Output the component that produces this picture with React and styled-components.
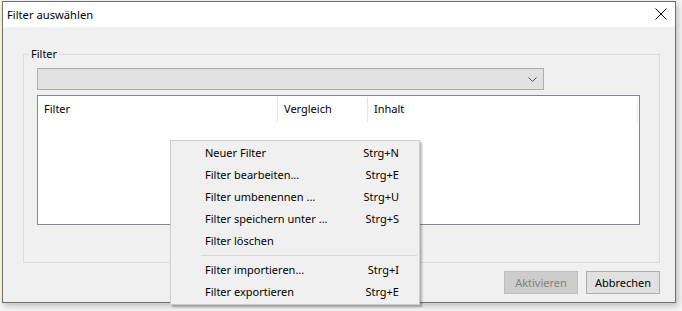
import React from "react";
import styled, { createGlobalStyle } from "styled-components";

const Global = createGlobalStyle`
  html, body { margin: 0; padding: 0; background: #f4f4f4; }
  body { font-family: "Noto Sans", "Open Sans", sans-serif; font-size: 11px; color: #000; }
  * { box-sizing: border-box; }
`;

const Desktop = styled.div`
  position: relative;
  width: 682px;
  height: 311px;
  overflow: hidden;
  display: flex;
  align-items: flex-start;
  background: #f4f4f4;
`;

const BackStrip = styled.div`
  width: 2px;
  height: 302px;
  background: #fbf6dc;
  flex: none;
`;

const Dialog = styled.div`
  width: 674px;
  height: 302px;
  margin-top: 1px;
  border: 1px solid #707070;
  background: #f0f0f0;
  box-shadow: 2px 3px 6px rgba(0, 0, 0, 0.22);
  display: flex;
  flex-direction: column;
  flex: none;
`;

const TitleBar = styled.div`
  height: 25px;
  flex: none;
  background: #fff;
  display: flex;
  align-items: center;
  justify-content: space-between;
  padding: 0 8px 1px 4px;
`;

const Title = styled.span`
  font-size: 11.2px;
`;

const Body = styled.div`
  flex: 1;
  display: flex;
  flex-direction: column;
  padding: 27px 15px 0 20px;
`;

const Group = styled.div`
  position: relative;
  height: 209px;
  border: 1px solid #dcdcdc;
  padding: 13px 19px 0 13px;
  display: flex;
  flex-direction: column;
  gap: 5px;
`;

const GroupLabel = styled.span`
  position: absolute;
  left: 5px;
  top: -9px;
  padding: 0 2px;
  background: #f0f0f0;
  line-height: 16px;
`;

const Combo = styled.div`
  width: 507px;
  height: 22px;
  background: #e1e1e1;
  border: 1px solid #adadad;
  display: flex;
  align-items: center;
  justify-content: flex-end;
  padding-right: 6px;
`;

const ListView = styled.div`
  height: 130px;
  background: #fff;
  border: 1px solid #828790;
  display: flex;
  flex-direction: column;
`;

const Header = styled.div`
  height: 26px;
  display: grid;
  grid-template-columns: 240px 90px 1fr;
  padding-top: 1px;
  padding-right: 1px;
`;

const HeaderCell = styled.div`
  display: flex;
  align-items: center;
  padding-left: 6px;
  padding-bottom: 2px;
  border-right: 1px solid ${(p) => (p.$last ? "#ececec" : "#e5e5e5")};
`;

const ButtonRow = styled.div`
  display: flex;
  justify-content: flex-end;
  gap: 8px;
  margin-top: 8px;
`;

const Button = styled.div`
  width: 74px;
  height: 23px;
  display: flex;
  align-items: center;
  justify-content: center;
  padding-bottom: 1px;
  border: 1px solid ${(p) => (p.$disabled ? "#bfbfbf" : "#adadad")};
  background: ${(p) => (p.$disabled ? "#cccccc" : "#e1e1e1")};
  color: ${(p) => (p.$disabled ? "#838383" : "#000")};
`;

const Menu = styled.div`
  position: absolute;
  left: 170px;
  top: 140px;
  width: 250px;
  border: 1px solid #cccccc;
  background: #f0f0f0;
  padding: 1px;
  box-shadow: 2px 2px 2px rgba(0, 0, 0, 0.28);
  display: flex;
  flex-direction: column;
`;

const MenuItem = styled.div`
  height: 22px;
  display: flex;
  align-items: center;
  justify-content: space-between;
  padding: 0 19px 1px 33px;
`;

const Separator = styled.div`
  height: 1px;
  margin: 3px 1px 3px 29px;
  background: #d7d7d7;
`;

function CloseIcon() {
  return (
    <svg width="12" height="12" viewBox="0 0 12 12">
      <path d="M0.5 0.5 L11.5 11.5 M11.5 0.5 L0.5 11.5" stroke="#000" strokeWidth="1" fill="none" />
    </svg>
  );
}

function Chevron() {
  return (
    <svg width="9" height="5" viewBox="0 0 9 5">
      <path d="M0.5 0.5 L4.5 4.5 L8.5 0.5" stroke="#505050" strokeWidth="1" fill="none" />
    </svg>
  );
}

const items = [
  ["Neuer Filter", "Strg+N"],
  ["Filter bearbeiten...", "Strg+E"],
  ["Filter umbenennen ...", "Strg+U"],
  ["Filter speichern unter ...", "Strg+S"],
  ["Filter löschen", ""],
];
const items2 = [
  ["Filter importieren...", "Strg+I"],
  ["Filter exportieren", "Strg+E"],
];

export default function App() {
  return (
    <>
      <Global />
      <Desktop>
        <BackStrip />
        <Dialog>
          <TitleBar>
            <Title>Filter auswählen</Title>
            <CloseIcon />
          </TitleBar>
          <Body>
            <Group>
              <GroupLabel>Filter</GroupLabel>
              <Combo>
                <Chevron />
              </Combo>
              <ListView>
                <Header>
                  <HeaderCell>Filter</HeaderCell>
                  <HeaderCell>Vergleich</HeaderCell>
                  <HeaderCell $last>Inhalt</HeaderCell>
                </Header>
              </ListView>
            </Group>
            <ButtonRow>
              <Button $disabled>Aktivieren</Button>
              <Button>Abbrechen</Button>
            </ButtonRow>
          </Body>
        </Dialog>
        <Menu>
          {items.map(([a, b]) => (
            <MenuItem key={a}>
              <span>{a}</span>
              <span>{b}</span>
            </MenuItem>
          ))}
          <Separator />
          {items2.map(([a, b]) => (
            <MenuItem key={a}>
              <span>{a}</span>
              <span>{b}</span>
            </MenuItem>
          ))}
        </Menu>
      </Desktop>
    </>
  );
}
